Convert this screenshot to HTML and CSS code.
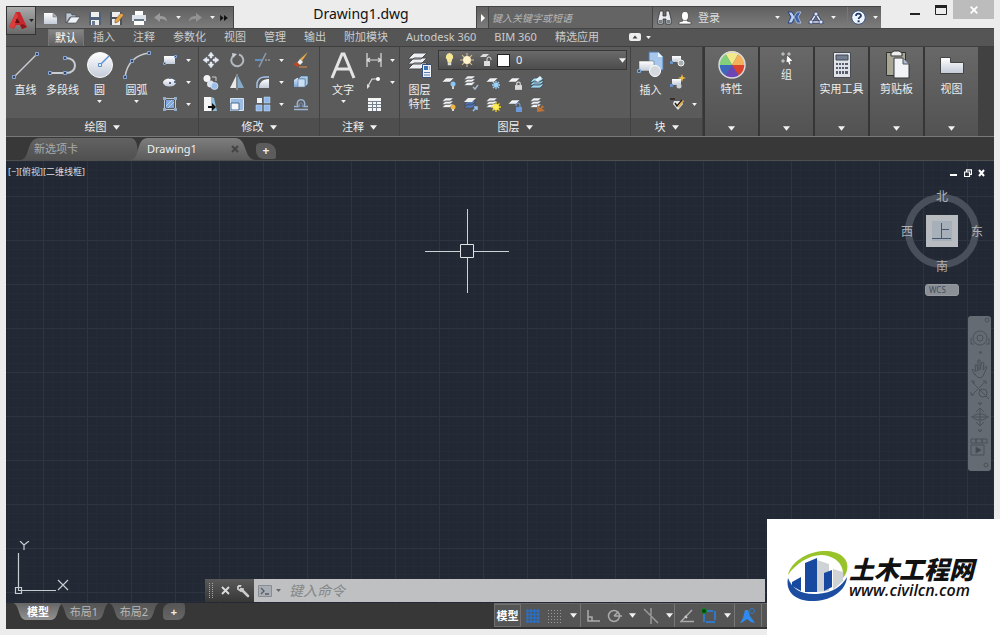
FILE: index.html
```html
<!DOCTYPE html>
<html lang="zh-CN">
<head>
<meta charset="utf-8">
<title>Drawing1.dwg</title>
<link rel="stylesheet" href="styles.css">
</head>
<body>
<svg class="sprite" aria-hidden="true">
  <defs>
    <linearGradient id="metal" x1="0" y1="0" x2="0" y2="1"><stop offset="0" stop-color="#fff"/><stop offset="1" stop-color="#c3cbd8"/></linearGradient>
    <linearGradient id="blue" x1="0" y1="0" x2="0" y2="1"><stop offset="0" stop-color="#d8e8fb"/><stop offset="1" stop-color="#7ba4d6"/></linearGradient>
    <symbol id="arrow" viewBox="0 0 8 5"><path d="M0 0h8L4 5z" fill="#f2f2f2"/></symbol>
    <symbol id="sheets" viewBox="0 0 16 16"><path d="M4 1h9L9 5H0zM4 4.500h9L9 8.500H0zM4 8h9l-4 4H0z" fill="#eef1f5" stroke="#555" stroke-width=".7"/></symbol>
    <symbol id="sheet" viewBox="0 0 16 16"><path d="M4 3h8L8 7H0z" fill="#eef1f5" stroke="#555" stroke-width=".5"/></symbol>
    <symbol id="bulb" viewBox="0 0 10 16"><path d="M5 0a4.500 4.500 0 0 1 3 7.500L7 11H3L2 7.500A4.500 4.500 0 0 1 5 0z" fill="#f6e795"/><path d="M3 11h4v3H3z" fill="#ddd"/></symbol>
    <symbol id="sun" viewBox="0 0 16 16"><path d="M8 0v16M0 8h16M2.300 2.300l11.400 11.400M13.700 2.300L2.300 13.700" stroke="#d8bd8d" stroke-width="1.200"/><circle cx="8" cy="8" r="4.500" fill="#fff2cb"/></symbol>
    <symbol id="lock" viewBox="0 0 8 10"><path d="M2 5V3a2 2 0 0 1 4 0v2" fill="none" stroke="#ddd" stroke-width="1.300"/><path d="M0 4.500h8V10H0z" fill="#d9d9d9"/></symbol>
    <pattern id="gridPattern" width="44" height="44" patternUnits="userSpaceOnUse" x="37" y="35">
      <path d="M9.500 0v44M18.500 0v44M26.500 0v44M35.500 0v44M0 9.500h44M0 18.500h44M0 26.500h44M0 35.500h44" stroke="#252c37"/>
      <path d="M.500 0v44M0 .500h44" stroke="#2e3541"/>
    </pattern>
  </defs>
</svg>

<div class="window">
  <header class="titlebar">
    <button class="app-button" aria-label="应用程序菜单">
      <svg width="18" height="20" viewBox="0 0 18 20"><path d="M7 1h4l7 15-5 2-2-4H7l-2 4-5-2z" fill="#c8282d"/><path d="M7 1l2 4-4 12-5-1z" fill="#dd3e3c"/><path d="M8 7l3 5H6z" fill="#5c1114"/><path d="M11 14l2 4 5-2-4-3z" fill="#8e181c"/></svg>
      <svg class="tiny dark" viewBox="0 0 8 5"><path d="M0 0h8L4 5z" fill="#222"/></svg>
    </button>
    <div class="quick">
      <button aria-label="新建"><svg width="16" height="14" viewBox="0 0 16 14"><path d="M1 2h9l4 4v7H1z" fill="url(#metal)"/><path d="M10 2v4h4" fill="#aab" stroke="#777" stroke-width=".6"/></svg></button>
      <button aria-label="打开"><svg width="16" height="14" viewBox="0 0 16 14"><path d="M1 12V2h5l1 2h4v2H5z" fill="#bcc8d8" stroke="#444" stroke-width=".6"/><path d="M2 12l4-6h9l-4 6z" fill="#eef3f9" stroke="#444" stroke-width=".6"/></svg></button>
      <button aria-label="保存"><svg width="16" height="14" viewBox="0 0 16 14"><path d="M2 1h12v13H2z" fill="#50617a"/><path d="M4 1h8v5H4zM4 9h8v5H4z" fill="#eee"/><path d="M5 10h3v4H5z" fill="#6e7c90"/></svg></button>
      <button aria-label="另存为"><svg width="16" height="14" viewBox="0 0 16 14"><path d="M1 1h12v13H1z" fill="#4c535e"/><path d="M3 1h8v5H3zM3 8h8v6H3z" fill="#eee"/><path d="M6 9l6-7 3 2-6 7-3 1z" fill="#e3a44c" stroke="#6b4519" stroke-width=".5"/></svg></button>
      <button aria-label="打印"><svg width="16" height="14" viewBox="0 0 16 14"><path d="M4 0h8v5H4zM3 9h10v5H3z" fill="#fff"/><path d="M1 4h14v6H1z" fill="#dbe2ea"/><path d="M3 8h10v2H3z" fill="#687583"/></svg></button>
      <button aria-label="放弃"><svg width="14" height="12" viewBox="0 0 14 12"><path d="M6 1v3c5 0 7 2 7 6-2-3-4-3-7-3v3L0 5.500z" fill="#9a9a9a"/></svg></button>
      <button class="narrow" aria-label="放弃选项"><svg class="tiny"><use href="#arrow"/></svg></button>
      <button aria-label="重做"><svg width="14" height="12" viewBox="0 0 14 12"><path d="M8 1v3C3 4 1 6 1 10c2-3 4-3 7-3v3l6-4.500z" fill="#929292"/></svg></button>
      <button class="narrow" aria-label="重做选项"><svg class="tiny"><use href="#arrow"/></svg></button>
      <button class="narrow" aria-label="更多"><svg width="8" height="6" viewBox="0 0 9 7"><path d="M0 0l4 3.500L0 7zM4.500 0L9 3.500 4.500 7z" fill="#111"/></svg></button>
    </div>
    <h1 class="title">Drawing1.dwg</h1>
    <div class="info">
      <button class="expander" aria-label="展开"><svg width="4" height="8" viewBox="0 0 4 8"><path d="M0 0l4 4-4 4z" fill="#fff"/></svg></button>
      <input class="search" type="text" aria-label="搜索" placeholder="键入关键字或短语">
      <button class="binocular" aria-label="搜索"><svg width="15" height="15" viewBox="0 0 15 15"><path d="M3 1h3v5h3V1h3l2 8v5H9V9H6v5H1V9z" fill="#e9edf2" stroke="#333" stroke-width=".8"/><path d="M2 10h3v3H2zM10 10h3v3h-3z" fill="#71808f"/></svg></button>
      <button class="login"><svg width="14" height="14" viewBox="0 0 14 14"><path d="M5 8v2l-4 1v2h12v-2l-4-1V8z" fill="#fff" stroke="#333" stroke-width=".6"/><ellipse cx="7" cy="5" rx="3.500" ry="4.500" fill="#fff" stroke="#333" stroke-width=".6"/></svg><span>登录</span></button>
      <button class="narrow" aria-label="登录选项"><svg class="tiny"><use href="#arrow"/></svg></button>
      <button class="exchange" aria-label="Exchange"><svg width="15" height="13" viewBox="0 0 15 13"><path d="M1 1h4l3 5-3 6H1l3-6z" fill="#b9d0f5" stroke="#263e7c"/><path d="M14 1h-4L7 6l3 6h4l-3-6z" fill="#3c62ac" stroke="#c5d8f5" stroke-width=".7"/></svg></button>
      <button class="a360" aria-label="A360"><svg width="16" height="14" viewBox="0 0 16 14"><path d="M8 3L3 11h10z" fill="none" stroke="#303b65" stroke-width="3"/><path d="M8 3L3 11h10z" fill="none" stroke="#dde5fc" stroke-width="1.500"/><circle cx="8" cy="3" r="2" fill="#dde5fc" stroke="#303b65" stroke-width=".7"/><circle cx="3" cy="11" r="2" fill="#dde5fc" stroke="#303b65" stroke-width=".7"/><circle cx="13" cy="11" r="2" fill="#dde5fc" stroke="#303b65" stroke-width=".7"/></svg></button>
      <button class="narrow" aria-label="A360 选项"><svg class="tiny"><use href="#arrow"/></svg></button>
      <button class="help" aria-label="帮助"><svg width="15" height="15" viewBox="0 0 15 15"><circle cx="7.500" cy="7.500" r="6.800" fill="#eef5ff" stroke="#3c5277"/><path d="M5 6c0-3 5-3 5-.3 0 1.600-2.400 1.600-2.400 3.300" fill="none" stroke="#233a63" stroke-width="1.800"/><path d="M6.600 10.300h2v2h-2z" fill="#233a63"/></svg></button>
      <button class="narrow" aria-label="帮助选项"><svg class="tiny"><use href="#arrow"/></svg></button>
    </div>
    <div class="controls">
      <button aria-label="最小化"><svg width="11" height="12" viewBox="0 0 11 12"><path d="M0 9h10v2H0z" fill="#222"/></svg></button>
      <button aria-label="最大化"><svg width="12" height="10" viewBox="0 0 12 10"><path d="M.500 1h11v8.500H.500z" fill="none" stroke="#222"/><path d="M0 0h12v3H0z" fill="#222"/></svg></button>
      <button class="close" aria-label="关闭"><svg width="8" height="8" viewBox="0 0 8 8"><path d="M.700 .700l6.600 6.600M7.300.700L.700 7.300" stroke="#fff" stroke-width="1.800"/></svg></button>
    </div>
  </header>

  <nav class="tabs">
    <button class="tab active">默认</button><button class="tab">插入</button><button class="tab">注释</button><button class="tab">参数化</button><button class="tab">视图</button><button class="tab">管理</button><button class="tab">输出</button><button class="tab">附加模块</button><button class="tab">Autodesk 360</button><button class="tab">BIM 360</button><button class="tab">精选应用</button>
    <button class="tab-toggle" aria-label="最小化功能区"><svg width="12" height="8" viewBox="0 0 12 8"><rect width="12" height="8" rx="2" fill="#eee"/><path d="M3.500 5.500L6 2.500l2.500 3z" fill="#444"/></svg><svg class="tiny"><use href="#arrow"/></svg></button>
  </nav>

  <main class="ribbon">
    <section class="panel draw">
      <div class="tools">
        <button class="big"><svg width="30" height="32" viewBox="0 0 30 32"><path d="M3 28L26 5" stroke="#c9ccd2" stroke-width="1.500"/><path d="M1.500 26.500h3v3h-3zM24.500 3.500h3v3h-3z" fill="#445" stroke="#82a9df"/></svg><span>直线</span></button>
        <button class="big"><svg width="30" height="32" viewBox="0 0 30 32"><path d="M2 24h16c12 0 12-15 0-15" fill="none" stroke="#c9ccd2" stroke-width="2"/><path d="M.500 22.500h3v3h-3zM15.500 22.500h3v3h-3zM15.500 7.500h3v3h-3z" fill="#445" stroke="#82a9df"/></svg><span>多段线</span></button>
        <button class="big"><svg width="30" height="32" viewBox="0 0 30 32"><circle cx="15" cy="16" r="12.500" fill="url(#metal)" stroke="#f8f8f8"/><path d="M15 16l9-9" stroke="#5b8fd6" stroke-width="1.500"/><path d="M13.500 14.500h3v3h-3z" fill="#e8effa" stroke="#5b8fd6"/></svg><span>圆</span><svg class="tiny"><use href="#arrow"/></svg></button>
        <button class="big"><svg width="30" height="32" viewBox="0 0 30 32"><path d="M3 28C5 14 13 6 27 4" fill="none" stroke="#c9ccd2" stroke-width="1.500"/><path d="M1.500 26.500h3v3h-3zM8.500 10.500h3v3h-3zM25.500 2.500h3v3h-3z" fill="#445" stroke="#82a9df"/></svg><span>圆弧</span><svg class="tiny"><use href="#arrow"/></svg></button>
        <div class="column">
          <button class="small split" aria-label="矩形"><svg width="16" height="16" viewBox="0 0 16 16"><path d="M2 4h11v8H2z" fill="url(#metal)"/><path d="M1.500 10.500h2v2h-2zM12.500 3.500h2v2h-2z" fill="#345" stroke="#82a9df"/></svg><svg class="tiny"><use href="#arrow"/></svg></button>
          <button class="small split" aria-label="椭圆"><svg width="16" height="16" viewBox="0 0 16 16"><ellipse cx="7.500" cy="8.500" rx="6.500" ry="4" fill="url(#metal)"/><path d="M7 8h2v2H7zM12 7h2v2h-2zM7 3h2v2H7z" fill="#536b8d"/></svg><svg class="tiny"><use href="#arrow"/></svg></button>
          <button class="small split" aria-label="图案填充"><svg width="16" height="16" viewBox="0 0 16 16"><path d="M4 4h8v8H4z" fill="#7ea9da"/><path d="M4 10l6-6M6 12l6-6" stroke="#b5d0ee"/><path d="M1 1h3v3H1zM12 1h3v3h-3zM1 12h3v3H1zM12 12h3v3h-3z" fill="#91abc8"/><path d="M4 2.500h8M4 13.500h8M2.500 4v8M13.500 4v8" stroke="#bdc8d6"/></svg><svg class="tiny"><use href="#arrow"/></svg></button>
        </div>
      </div>
      <button class="caption">绘图<svg class="small-arrow"><use href="#arrow"/></svg></button>
    </section>

    <section class="panel modify">
      <div class="tools">
        <div class="matrix">
          <button class="small" aria-label="移动"><svg width="16" height="16" viewBox="0 0 16 16"><path d="M8 0l3 4H9v2H7V4H5zM8 16l3-4H9v-2H7v2H5zM0 8l4-3v2h2v2H4v2zM16 8l-4-3v2h-2v2h2v2z" fill="#e8edf5" stroke="#d3deee" stroke-width=".5"/></svg></button>
          <button class="small" aria-label="旋转"><svg width="16" height="16" viewBox="0 0 16 16"><path d="M5 3.200A6 6 0 1 0 10 2.500" fill="none" stroke="#b4b8bf" stroke-width="2"/><path d="M3 1l5 1-4 4z" fill="#c8ced8"/></svg></button>
          <button class="small split" aria-label="修剪"><svg width="16" height="16" viewBox="0 0 16 16"><path d="M0 8h7" stroke="#66a0e6" stroke-width="1.500"/><path d="M10 8h6" stroke="#bbb" stroke-dasharray="2 1"/><path d="M4 15l7-14" stroke="#8a9aaf" stroke-width="1.500"/></svg><svg class="tiny"><use href="#arrow"/></svg></button>
          <button class="small" aria-label="删除"><svg width="16" height="16" viewBox="0 0 16 16"><path d="M15 0L9 9 7 7z" fill="#e9ad45"/><path d="M7 7l3 3-3 3-3-2z" fill="#eee"/><path d="M0 12l4-2 3 3-3 2z" fill="#b9472a"/><path d="M6 15h8" stroke="#e98c3f"/></svg></button>
          <button class="small" aria-label="复制"><svg width="16" height="16" viewBox="0 0 16 16"><circle cx="4" cy="4.500" r="3.500" fill="#f1f3f6"/><circle cx="7.500" cy="10" r="3.500" fill="#dce4ef"/><circle cx="11.500" cy="12" r="3.500" fill="#9bbfe9" stroke="#e1ecf8" stroke-width=".7"/><path d="M9 3h4v4" fill="none" stroke="#ccc"/></svg></button>
          <button class="small" aria-label="镜像"><svg width="16" height="16" viewBox="0 0 16 16"><path d="M7 2v12H1z" fill="#e7ebee"/><path d="M9 2v12h6z" fill="#86abc9"/><path d="M8 0v16" stroke="#aab6c5"/></svg></button>
          <button class="small split" aria-label="圆角"><svg width="16" height="16" viewBox="0 0 16 16"><path d="M4 14C4 9 7 5 14 5v9z" fill="url(#metal)"/><path d="M2 14V9c1-4 4-6 8-6h4" fill="none" stroke="#a2c4eb" stroke-width="1.500"/></svg><svg class="tiny"><use href="#arrow"/></svg></button>
          <button class="small" aria-label="分解"><svg width="16" height="16" viewBox="0 0 16 16"><path d="M1 6l3-2h8v7l-2 2H1z" fill="url(#blue)"/><path d="M5 5l3-3h7v8l-3 3V5z" fill="#a8c9e9" stroke="#446486" stroke-width=".6"/><path d="M5 5h7v8H5z" fill="#c9dff4" stroke="#5a7796" stroke-width=".6"/></svg></button>
          <button class="small" aria-label="拉伸"><svg width="16" height="16" viewBox="0 0 16 16"><path d="M1 1h7v14H1z" fill="#f4f6f8"/><path d="M8 1l3 1 3 13H8z" fill="#8fbddd"/><path d="M5 10h4V7l4 4-4 4v-3H5z" fill="#111"/></svg></button>
          <button class="small" aria-label="缩放"><svg width="16" height="16" viewBox="0 0 16 16"><path d="M1.500 2.500h13v12h-13z" fill="#9bbce3" stroke="#d6e3f3"/><path d="M2 7h8v7H2z" fill="#f4f6f8" stroke="#456a95"/></svg></button>
          <button class="small split" aria-label="阵列"><svg width="16" height="16" viewBox="0 0 16 16"><path d="M2 2h5v5H2z" fill="#eef2f8"/><path d="M9 1h6v6H9zM1 9h6v6H1zM9 9h6v6H9z" fill="#91b7e7" stroke="#c3dcf9" stroke-width=".5"/></svg><svg class="tiny"><use href="#arrow"/></svg></button>
          <button class="small" aria-label="偏移"><svg width="16" height="16" viewBox="0 0 16 16"><path d="M1 13.500h14M1 10.500h4c-4-9 10-9 6 0h4" fill="none" stroke="#9db5d1" stroke-width="1.500"/><path d="M5 10.500h2c-2-5 4-5 2 0h2" fill="none" stroke="#7895b7"/></svg></button>
        </div>
      </div>
      <button class="caption">修改<svg class="small-arrow"><use href="#arrow"/></svg></button>
    </section>

    <section class="panel annotate">
      <div class="tools">
        <button class="big"><svg width="26" height="32" viewBox="0 0 26 32"><path d="M2 29L12 5h2l10 24M6 20h14" fill="none" stroke="#e4e4e4" stroke-width="3"/></svg><span>文字</span><svg class="tiny"><use href="#arrow"/></svg></button>
        <div class="column">
          <button class="small split" aria-label="标注"><svg width="16" height="16" viewBox="0 0 16 16"><path d="M1 1v14M15 1v14M1 8h14M4 6L1 8l3 2M12 6l3 2-3 2" fill="none" stroke="#ddd" stroke-width="1.200"/></svg><svg class="tiny"><use href="#arrow"/></svg></button>
          <button class="small split" aria-label="引线"><svg width="16" height="16" viewBox="0 0 16 16"><path d="M2 12l4-7h6" fill="none" stroke="#ddd" stroke-width="1.200"/><circle cx="12" cy="5" r="2" fill="#fff"/><path d="M1 15l0-5 3 2z" fill="#ddd"/></svg><svg class="tiny"><use href="#arrow"/></svg></button>
          <button class="small" aria-label="表格"><svg width="16" height="16" viewBox="0 0 16 16"><path d="M2 2h13v13H2z" fill="#f5f5f5"/><path d="M2 5.500h13M2 8.500h13M2 11.500h13M6.500 5v10M10.500 5v10" stroke="#77808d"/></svg></button>
        </div>
      </div>
      <button class="caption">注释<svg class="small-arrow"><use href="#arrow"/></svg></button>
    </section>

    <section class="panel layers">
      <div class="tools">
        <button class="big"><svg width="28" height="32" viewBox="0 0 28 32"><path d="M8 4h13l-6 6H2zM8 9h13l-6 6H2zM8 14h13l-6 6H2z" fill="#eceff3" stroke="#4c4c4c"/><path d="M16.500 15.500h9v13h-9z" fill="#eef2f7" stroke="#35507c"/><path d="M18 17h4v4h-4z" fill="#3c70b7"/><path d="M23 18h1M23 20h1M18 23.500h6M18 26h6" stroke="#5a7fae"/></svg><span>图层<br>特性</span></button>
        <div class="layer-stack">
          <label class="combo">
            <svg width="9" height="14"><use href="#bulb"/></svg><svg width="14" height="14"><use href="#sun"/></svg>
            <svg width="13" height="14" viewBox="0 0 13 14"><path d="M3 1h6L6 4H0z" fill="#ddd"/><path d="M7 9V6a2 2 0 0 1 4 0v1" fill="none" stroke="#ddd"/><path d="M4 8h6v5H4z" fill="#ddd"/></svg>
            <span class="swatch"></span>
            <select aria-label="图层"><option>0</option></select>
            <svg class="small-arrow"><use href="#arrow"/></svg>
          </label>
          <div class="layer-grid">
            <button class="small" aria-label="关"><svg width="16" height="16" viewBox="0 0 16 16"><use href="#sheet" width="16" height="16"/><circle cx="11" cy="9" r="2.500" fill="#8cc5f5"/><path d="M10 11h2v3h-2z" fill="#ccc"/></svg></button>
            <button class="small" aria-label="隔离"><svg width="16" height="16" viewBox="0 0 16 16"><use href="#sheets" width="14" height="14"/><path d="M9 12l2 2 3-4" fill="none" stroke="#a8b8cc" stroke-width="1.500"/></svg></button>
            <button class="small" aria-label="冻结"><svg width="16" height="16" viewBox="0 0 16 16"><use href="#sheet" width="16" height="16"/><path d="M10 6v8M6 10h8M7 7l6 6M13 7l-6 6" stroke="#99d1f7" stroke-width="1.300"/></svg></button>
            <button class="small" aria-label="锁定"><svg width="16" height="16" viewBox="0 0 16 16"><use href="#sheet" width="16" height="16"/><use href="#lock" x="7" y="6" width="7" height="9"/></svg></button>
            <button class="small" aria-label="匹配"><svg width="16" height="16" viewBox="0 0 16 16"><path d="M4 3h10l-4 4H0zM4 6h10l-4 4H0zM4 9h10l-4 4H0z" fill="#9ed5ee" stroke="#3a4b56" stroke-width=".7"/><path d="M10 1l2 2-4 4-3-2z" fill="#dff3fc"/></svg></button>
            <button class="small" aria-label="打开图层"><svg width="16" height="16" viewBox="0 0 16 16"><use href="#sheets" width="14" height="14"/><circle cx="11" cy="10" r="2.500" fill="#f2b443"/><path d="M10 12h2v2h-2z" fill="#ddd"/></svg></button>
            <button class="small" aria-label="取消隔离"><svg width="16" height="16" viewBox="0 0 16 16"><path d="M4 4h8L8 8H0zM4 7h8l-4 4H0z" fill="#5579b5" stroke="#334" stroke-width=".4"/><path d="M4 1h8L8 5H0z" fill="#eee"/><path d="M9 14l4-4M10 10h3v3" fill="none" stroke="#9dc3f0" stroke-width="1.500"/></svg></button>
            <button class="small" aria-label="解冻"><svg width="16" height="16" viewBox="0 0 16 16"><use href="#sheets" width="14" height="14"/><path d="M10 5v10M5 10h10M6.500 6.500l7 7M13.500 6.500l-7 7" stroke="#f0d331" stroke-width="1.300"/><circle cx="10" cy="10" r="3" fill="#ffec59"/></svg></button>
            <button class="small" aria-label="解锁"><svg width="16" height="16" viewBox="0 0 16 16"><use href="#sheet" width="16" height="16"/><path d="M8 9V8a2 2 0 0 1 4 0v2" fill="none" stroke="#7fa8e2"/><path d="M8 10h6v5H8z" fill="#6c99d8"/></svg></button>
            <button class="small" aria-label="更改图层"><svg width="16" height="16" viewBox="0 0 16 16"><use href="#sheets" width="14" height="14"/><path d="M7 8l8 6-8 1zM12 8l2 2-4 3" fill="#bf7435"/></svg></button>
          </div>
        </div>
      </div>
      <button class="caption">图层<svg class="small-arrow"><use href="#arrow"/></svg></button>
    </section>

    <section class="panel block">
      <div class="tools">
        <button class="big"><svg width="28" height="32" viewBox="0 0 28 32"><path d="M12 3h9l5 5v13H12z" fill="#a7c7ed" stroke="#4c79aa"/><path d="M21 3v5h5z" fill="#edf5ff"/><path d="M2 12h15v10H2z" fill="url(#metal)" stroke="#555" stroke-width=".5"/><circle cx="18" cy="22" r="5.500" fill="#d5d9dd" stroke="#fff"/><path d="M.500 20.500h3v3h-3z" fill="#456" stroke="#7ba8df"/></svg><span>插入</span></button>
        <div class="column">
          <button class="small" aria-label="创建块"><svg width="16" height="16" viewBox="0 0 16 16"><path d="M2 4h9v6H2z" fill="url(#metal)"/><circle cx="11" cy="11" r="3" fill="#a9aeb4" stroke="#f3f3f3"/><path d="M0 9h3v3H0z" fill="#6791c8"/></svg></button>
          <button class="small" aria-label="编辑块"><svg width="16" height="16" viewBox="0 0 16 16"><path d="M2 5h9v6H2z" fill="url(#metal)"/><circle cx="9" cy="12" r="2.500" fill="#ccd1d6"/><path d="M12 0l1 3 3 1-3 1-1 3-1-3-3-1 3-1z" fill="#f2bd42"/><path d="M0 10h3v3H0z" fill="#6791c8"/></svg></button>
          <button class="small split" aria-label="编辑属性"><svg width="16" height="16" viewBox="0 0 16 16"><path d="M4 5h7l2 3-5 6-5-6z" fill="#e3e4e5"/><path d="M0 3h5M5 7l2 3 5-6" fill="none" stroke="#2d2217" stroke-width="1.400"/><path d="M8 10l5-6 1 1-5 7z" fill="#dfa94b"/></svg><svg class="tiny"><use href="#arrow"/></svg></button>
        </div>
      </div>
      <button class="caption">块<svg class="small-arrow"><use href="#arrow"/></svg></button>
    </section>

    <button class="folded"><svg width="30" height="32" viewBox="0 0 30 32"><path d="M15 15L8 3a14 14 0 0 1 14 0z" fill="#f1e98a"/><path d="M15 15L22 3a13 13 0 0 1 6 12z" fill="#f3b15b"/><path d="M15 15h13a13 13 0 0 1-6 11z" fill="#d9432d"/><path d="M15 15l7 11a13 13 0 0 1-14 0z" fill="#6d46b6"/><path d="M15 15L8 26A13 13 0 0 1 2 15z" fill="#3d69bd"/><path d="M15 15H2A13 13 0 0 1 8 3z" fill="#83cf7c"/><circle cx="15" cy="15" r="13" fill="none" stroke="#d8d9de" stroke-width="1.500"/></svg><span>特性</span><svg class="small-arrow"><use href="#arrow"/></svg></button>
    <button class="folded"><svg width="14" height="18" viewBox="0 0 14 18"><path d="M2 3h2v2H2zM8 3h2v2H8zM2 10h2v2H2z" fill="#5f8d6a" stroke="#ddd" stroke-width=".8"/><path d="M7 5l6 6-3 .500 1 3-2 .500-1-3-2 1z" fill="#fff" stroke="#333" stroke-width=".5"/></svg><span>组</span><svg class="small-arrow"><use href="#arrow"/></svg></button>
    <button class="folded"><svg width="30" height="32" viewBox="0 0 30 32"><path d="M6.500 2.500h17v25h-17z" fill="#dfe3e8" stroke="#464b54"/><path d="M9 5h12v5H9z" fill="#727d8e" stroke="#414852"/><path d="M9 13h2v2H9zM12 13h2v2h-2zM15 13h2v2h-2zM18 13h3v2h-3zM9 17h2v2H9zM12 17h2v2h-2zM15 17h2v2h-2zM18 17h3v2h-3zM9 21h2v3H9zM12 21h2v3h-2zM15 21h2v3h-2zM18 21h3v3h-3z" fill="#555e6c"/></svg><span>实用工具</span><svg class="small-arrow"><use href="#arrow"/></svg></button>
    <button class="folded"><svg width="30" height="32" viewBox="0 0 30 32"><path d="M4.500 2.500h19v23h-19z" fill="#a8a694" stroke="#33332d"/><path d="M9 3l3-2h5l3 2v3H9z" fill="#eee" stroke="#333"/><path d="M12 8h9l6 6v14H12z" fill="#f1f3f6" stroke="#33363b"/><path d="M21 8v6h6" fill="#aebbd0" stroke="#555"/></svg><span>剪贴板</span><svg class="small-arrow"><use href="#arrow"/></svg></button>
    <button class="folded"><svg width="30" height="32" viewBox="0 0 30 32"><path d="M3.500 7.500h10v5h13v11h-23z" fill="url(#metal)" stroke="#444" stroke-width="1"/></svg><span>视图</span><svg class="small-arrow"><use href="#arrow"/></svg></button>
  </main>

  <nav class="files">
    <button class="file inactive"><span>新选项卡</span></button>
    <button class="file current"><span>Drawing1</span><svg width="8" height="8" viewBox="0 0 8 8"><path d="M1 1l6 6M7 1L1 7" stroke="#444" stroke-width="2"/></svg></button>
    <button class="new-file" aria-label="新建图形">+</button>
  </nav>

  <section class="canvas">
    <svg class="grid" width="100%" height="100%"><rect width="100%" height="100%" fill="url(#gridPattern)"/></svg>
    <div class="view-label">[−][俯视][二维线框]</div>
    <div class="view-controls">
      <button aria-label="最小化视口"><svg width="8" height="8" viewBox="0 0 8 8"><path d="M0 5h7v2H0z" fill="#fff"/></svg></button>
      <button aria-label="还原视口"><svg width="8" height="8" viewBox="0 0 8 8"><path d="M.500 3h5v4.500h-5zM2.500 3V.800h5v4.500h-2" fill="none" stroke="#fff" stroke-width="1.200"/></svg></button>
      <button aria-label="关闭视口"><svg width="8" height="8" viewBox="0 0 8 8"><path d="M1 1l5 6M6 1L1 7" stroke="#fff" stroke-width="2"/></svg></button>
    </div>
    <svg class="crosshair" width="84" height="84" viewBox="0 0 84 84"><path d="M0 42.500h35M49 42.500h35M42.500 0v35M42.500 49v35" stroke="#cfd2d5"/><path d="M35.500 35.500h13v13h-13z" fill="none" stroke="#e1e3e5"/></svg>
    <svg class="compass" width="84" height="84" viewBox="0 0 84 84"><circle cx="42" cy="42" r="33.500" fill="none" stroke="#4a505b" stroke-width="7"/><path d="M26 26h32v32H26z" fill="#b8bcc0"/><path d="M32 32h20v20H32z" fill="#a7b0b9"/><path d="M32 49.500h19M41.500 34v15M42 40.500h7" stroke="#45566f"/><g class="compass-text"><text x="42" y="12">北</text><text x="7" y="47">西</text><text x="77" y="47">东</text><text x="42" y="82">南</text></g></svg>
    <button class="wcs">WCS</button>
    <div class="navigation">
      <svg width="23" height="155" viewBox="0 0 23 155" fill="none" stroke="#4a5159"><circle cx="19" cy="4" r="2"/><circle cx="12" cy="22" r="7"/><circle cx="12" cy="22" r="3"/><path d="M6 28h-3v-6M18 28h3v-6"/><path d="M11 36h3l-1.500 2z"/><path d="M7 59l-3-5 1-1 3 3-1-7h2l1 6V44h2v10l2-8 2 1-1 7 3-4 1 1-4 9c-2 3-6 2-8-2z"/><path d="M4 66l13 13M17 66L4 79M3 65h3v3M15 65h3v3M3 76v3h3"/><circle cx="15" cy="77" r="4"/><path d="M18 80l3 3M10 87h4l-2 2z"/><path d="M12 92v18M3 101h18M8 96l4-4 4 4M8 106l4 4 4-4M10 114h4l-2 2z"/><ellipse cx="12" cy="101" rx="7" ry="3"/><path d="M3 123h5v4H3zM8 123h6v4H8zM14 123h5v4h-5zM3 129h13v10H3z"/><path d="M8 131v6l5-3z" fill="#3d444d"/><circle cx="18" cy="149" r="2"/></svg>
    </div>
    <svg class="ucs" width="62" height="56" viewBox="0 0 62 56"><path d="M6.500 12v37M6 49.500h38M3.500 46.500h6v6h-6zM8 0l4 4v5M17 0l-5 4M46 39l10 10M56 39L46 49" fill="none" stroke="#c8ccd1" stroke-width="1.200"/></svg>
    <div class="command">
      <div class="command-tools"><svg width="6" height="16" viewBox="0 0 6 16"><path d="M1.500 0v16M4.500 0v16" stroke="#aaa" stroke-dasharray="1 1"/></svg><button aria-label="关闭命令行"><svg width="9" height="9" viewBox="0 0 9 9"><path d="M1 1l7 7M8 1L1 8" stroke="#ddd" stroke-width="1.800"/></svg></button><button aria-label="自定义"><svg width="14" height="14" viewBox="0 0 14 14"><path d="M5 5l7 7" stroke="#ccc" stroke-width="2.500" stroke-linecap="round"/><path d="M2 2v3l3 2 2-2-2-3H2" fill="none" stroke="#ccc" stroke-width="1.800" stroke-dasharray="10 3"/></svg></button></div>
      <label class="prompt"><svg width="14" height="12" viewBox="0 0 14 12"><path d="M.500.500h13v11H.500z" fill="#a9adb4" stroke="#888d94"/><path d="M3 3l3 3-3 3M7 9h4" fill="none" stroke="#555d68" stroke-width="1.300"/></svg><svg class="tiny" viewBox="0 0 8 5"><path d="M0 0h8L4 5z" fill="#666"/></svg><input type="text" aria-label="命令" placeholder="键入命令"></label>
    </div>
  </section>

  <footer class="bottom">
    <div class="layouts"><button class="layout selected">模型</button><button class="layout second-layout">布局1</button><button class="layout">布局2</button><button class="layout add" aria-label="新建布局">+</button></div>
    <div class="status">
      <button class="model">模型</button>
      <div class="status-group first"><svg width="14" height="14" viewBox="0 0 14 14"><path d="M1.500 0v14M5 0v14M8.500 0v14M12 0v14M0 2h14M0 5.500h14M0 9h14M0 12.500h14" stroke="#2870c5" stroke-width="1.400"/></svg><svg width="14" height="14" viewBox="0 0 14 14"><path d="M0 1.500h14M0 4.500h14M0 7.500h14M0 10.500h14M0 13.500h14" stroke="#999" stroke-dasharray="1 2"/></svg><svg class="small-arrow"><use href="#arrow"/></svg></div>
      <div class="status-group second"><svg width="14" height="14" viewBox="0 0 14 14"><path d="M2 1v11h12M2 8h4v4" fill="none" stroke="#aaa" stroke-width="1.500"/></svg><svg width="15" height="14" viewBox="0 0 15 14"><circle cx="7" cy="7" r="5.500" fill="none" stroke="#aaa" stroke-width="1.500"/><path d="M7 7h8M7 7l4-4" stroke="#aaa" stroke-width="1.500"/></svg><svg class="small-arrow"><use href="#arrow"/></svg><svg width="16" height="16" viewBox="0 0 16 16"><path d="M1 1l14 14M8 0v7M8 9v7" stroke="#999" stroke-width="1.500"/></svg><svg class="small-arrow"><use href="#arrow"/></svg></div>
      <div class="status-group third"><svg width="14" height="14" viewBox="0 0 14 14"><path d="M12 1L1 12.500h13" fill="none" stroke="#aaa" stroke-width="1.500"/><path d="M5 7l2 2" stroke="#ccc" stroke-width="2"/></svg><svg width="16" height="16" viewBox="0 0 16 16"><path d="M3 3h11v11H3z" fill="none" stroke="#2784e9" stroke-width="1.500" stroke-dasharray="9 2"/><circle cx="3" cy="3" r="2.500" fill="#064706" stroke="#0c8e25"/></svg><svg class="small-arrow"><use href="#arrow"/></svg></div>
      <div class="status-group last"><svg width="16" height="16" viewBox="0 0 16 16"><path d="M0 15l3-5 2-8h3l2 6 5 7-4-1-4-3-4 3z" fill="#2d8aee"/><circle cx="12" cy="3" r="2.500" fill="none" stroke="#2d79c5"/></svg></div>
    </div>
  </footer>
</div>

<aside class="watermark">
  <svg width="64" height="52" viewBox="0 0 64 52"><path d="M1 24C5 6 34-6 52 3c11 6 10 17 4 24 1-9-2-18-15-22C27 1 10 11 1 24z" fill="#99c32a"/><path d="M1 27c4 11 14 17 29 16 16-1 25-8 30-17-1 13-14 23-32 24C9 51-2 41 1 27z" fill="#1d4da0"/><path d="M30 9l12 4v27l-12 1zM46 18l10 3v9l-10 9z" fill="#d0d3d5"/><path d="M18 12l12-5v34H18zM37 22l8-3v17l-8 4zM5 31l9-5v14l-9-5z" fill="#1749a0"/></svg>
  <div class="brand"><strong>土木工程网</strong><a href="#">www.civilcn.com</a></div>
</aside>
</body>
</html>
```

FILE: styles.css
```css
* { box-sizing: border-box; }
body { margin: 0; background: #ececec; color: #ddd; font-family: "Noto Sans", "Noto Sans CJK SC", sans-serif; font-size: 11px; line-height: 14px; }
button, input, select { margin: 0; padding: 0; border: 0; background: none; color: inherit; font: inherit; }
button { display: flex; align-items: center; justify-content: center; }
svg { flex: none; display: block; }
.sprite { position: absolute; width: 0; height: 0; }
.tiny { width: 5px; height: 3px; }
.small-arrow { width: 7px; height: 5px; }
.window { display: flex; flex-direction: column; height: 100vh; padding: 0 6px 6px; }

.titlebar { position: relative; display: flex; align-items: flex-end; height: 28px; }
.app-button { position: absolute; left: 0; top: 6px; z-index: 2; width: 30px; height: 29px; gap: 2px; border: 1px solid #333; background: linear-gradient(#aaa, #696969); }
.quick, .info { display: flex; height: 22px; border-top: 1px solid #444; background: linear-gradient(#606060, #7c7c7c); }
.quick { width: 228px; padding-left: 34px; border-right: 1px solid #444; }
.quick button { width: 22px; }
.quick .narrow { width: 12px; }
.title { flex: 1; margin: 0; padding-left: 12px; color: #111; font-size: 14px; font-weight: 400; line-height: 28px; text-align: center; }
.expander { width: 13px; border-left: 1px solid #444; border-right: 1px solid #444; }
.info { width: 405px; }
.search { width: 164px; padding-left: 3px; border-right: 1px solid #444; background: #646464; font-size: 10px; font-style: italic; }
.search::placeholder { color: #b6b6b6; }
.binocular { width: 22px; }
.login { gap: 6px; padding-left: 3px; font-size: 11px; }
.info .narrow { width: 12px; }
.login + .narrow { margin-left: auto; }
.exchange { width: 22px; }
.a360 { width: 22px; }
.help { width: 22px; margin-left: 8px; border-left: 1px solid #777; }
.controls { display: flex; align-self: flex-start; height: 19px; padding-left: 22px; }
.controls button { width: 25px; }
.controls .close { width: 41px; background: #bcbcbc; }

.tabs { display: flex; align-items: flex-start; height: 18px; padding-left: 42px; background: #555; border-top: 1px solid #454545; color: #ccc; }
.tab { height: 16px; padding: 0 9px; font-size: 11px; }
.tab.active { width: 36px; height: 17px; padding: 0; border: 1px solid #777; border-bottom: 0; background: linear-gradient(#858585, #606060); color: #fff; }
.tab-toggle { height: 16px; gap: 5px; margin-left: 21px; }

.ribbon { display: flex; height: 91px; background: #414141; border-top: 1px solid #3e3e3e; border-bottom: 1px solid #777; color: #eee; }
.panel { display: flex; flex-direction: column; flex: none; background: #5b5b5b; border-right: 1px solid #424242; }
.tools { display: flex; flex: 1; padding: 2px 0 0 1px; }
.caption { height: 18px; gap: 6px; background: #4e4e4e; }
.draw { width: 193px; }
.modify { width: 121px; }
.annotate { width: 80px; }
.layers { width: 231px; }
.block { width: 72px; }
.big { flex-direction: column; justify-content: flex-start; width: 37px; height: 66px; }
.big span { margin-top: 2px; white-space: nowrap; }
.big .tiny { margin-top: 3px; }
.column, .matrix { display: grid; grid-auto-rows: 22px; }
.small { width: 18px; height: 22px; }
.split { display: flex; width: 34px; gap: 8px; padding-left: 1px; justify-content: flex-start; }
.matrix .split { width: 33px; }
.draw .column { margin-left: 6px; }
.matrix { grid-template-columns: 26px 26px 38px 20px; padding-left: 2px; }
.annotate .big { width: 44px; }
.block .column .split { gap: 6px; width: 30px; }
.layer-stack { flex: 1; }
.combo { display: flex; align-items: center; height: 20px; margin: 1px 3px 2px 0; gap: 6px; padding: 0 0 0 6px; border: 1px solid #383838; background: linear-gradient(#6a6a6a, #4d4d4d); }
.swatch { width: 13px; height: 13px; margin-left: -2px; background: white; border: 1px solid #222; }
.combo select { flex: 1; appearance: none; }
.layer-grid { display: grid; grid-template-columns: repeat(5, 22px); grid-auto-rows: 22px; padding-left: 3px; }
.folded { flex: none; flex-direction: column; justify-content: flex-start; width: 55px; padding: 3px 0 5px; border-left: 2px solid #363636; background: linear-gradient(#686868, #525252); white-space: nowrap; }
.folded span { line-height: 14px; }
.folded .small-arrow { margin-top: auto; }

.files { display: flex; height: 24px; align-items: flex-end; padding-left: 14px; background: #383838; border-bottom: 1px solid #505050; color: #aaa; }
.file { height: 22px; background: linear-gradient(#626262, #505050); }
.inactive { width: 118px; padding: 0 14px; justify-content: flex-start; clip-path: path("M0 22C11 22 5 0 20 0H110C117 0 118 8 118 22Z"); }
.current { z-index: 1; width: 126px; margin-left: -8px; padding: 0 17px; gap: 10px; justify-content: space-between; color: #eee; background: linear-gradient(#7e7e7e, #5b5b5b); clip-path: path("M0 22C11 22 5 0 18 0H105C118 0 113 22 126 22Z"); font-size: 11px; }
.new-file { width: 20px; height: 16px; margin-bottom: 1px; border-radius: 4px 9px 2px 8px; background: #5c5c5c; color: #eee; font-size: 12px; font-weight: 700; }

.canvas { position: relative; flex: 1; overflow: hidden; background: #222834; }
.grid { position: absolute; inset: 0; }
.view-label { position: absolute; top: 4px; left: 2px; font-size: 9px; }
.view-controls { position: absolute; display: flex; right: 8px; top: 8px; gap: 6px; }
.crosshair { position: absolute; top: 48px; left: 419px; }
.compass { position: absolute; top: 28px; right: 10px; overflow: visible; }
.compass-text { fill: #aeb2b6; font-size: 12px; text-anchor: middle; }
.wcs { position: absolute; top: 123px; right: 35px; width: 34px; height: 12px; justify-content: flex-start; padding-left: 3px; border: 1px solid #969ba2; border-radius: 3px; background: #8b9097; color: #444d57; font-size: 8px; }
.navigation { position: absolute; top: 155px; right: 3px; border-radius: 3px; background: #646b72; }
.ucs { position: absolute; left: 6px; bottom: 6px; }
.command { position: absolute; display: flex; left: 199px; right: 229px; bottom: 1px; height: 23px; background: #bec0c2; }
.command-tools { display: flex; align-items: center; width: 49px; padding: 0 4px 0 3px; justify-content: space-between; background: linear-gradient(#5a5a5a, #373737); }
.prompt { flex: 1; display: flex; align-items: center; padding-left: 4px; gap: 4px; }
.prompt input { flex: 1; margin-left: 4px; font-size: 14px; font-style: italic; }
.prompt input::placeholder { color: #868789; opacity: 1; }

.bottom { display: flex; height: 26px; background: #373737; justify-content: space-between; }
.layouts { display: flex; padding-left: 7px; }
.layout { width: 50px; height: 17px; background: linear-gradient(#555, #666); color: #b8b8b8; clip-path: path("M0 0H50C44 2 46 17 38 17H13C5 17 7 2 0 0Z"); }
.layout.selected { background: linear-gradient(#666, #929292); color: #fff; font-weight: 700; }
.second-layout { margin-left: -4px; }
.layout.add { width: 22px; margin-left: 4px; border-radius: 8px 3px 8px 4px; clip-path: none; font-weight: 700; color: #eee; }
.status { display: flex; width: 500px; border-top: 1px solid #666; border-bottom: 2px solid #333; background: #555; }
.model { width: 27px; font-weight: 700; color: white; border: 1px solid #707070; }
.status-group { display: flex; align-items: center; padding: 0 5px; gap: 8px; border-right: 1px solid #777; }
.first { width: 60px; }
.second { width: 94px; gap: 7px; }
.third { width: 60px; gap: 7px; }

.watermark { position: fixed; z-index: 5; right: 0; bottom: 0; display: flex; align-items: center; width: 233px; height: 116px; padding-left: 20px; background: #fff; color: #111; }
.brand { display: flex; flex-direction: column; margin-left: -2px; white-space: nowrap; }
.brand strong { font-family: "Noto Sans CJK SC", sans-serif; font-size: 25px; font-weight: 900; font-style: italic; line-height: 24px; }
.brand a { padding-top: 2px; color: #111; font-family: "Open Sans", sans-serif; font-size: 16px; font-weight: 600; font-style: italic; line-height: 16px; text-decoration: none; }
```
